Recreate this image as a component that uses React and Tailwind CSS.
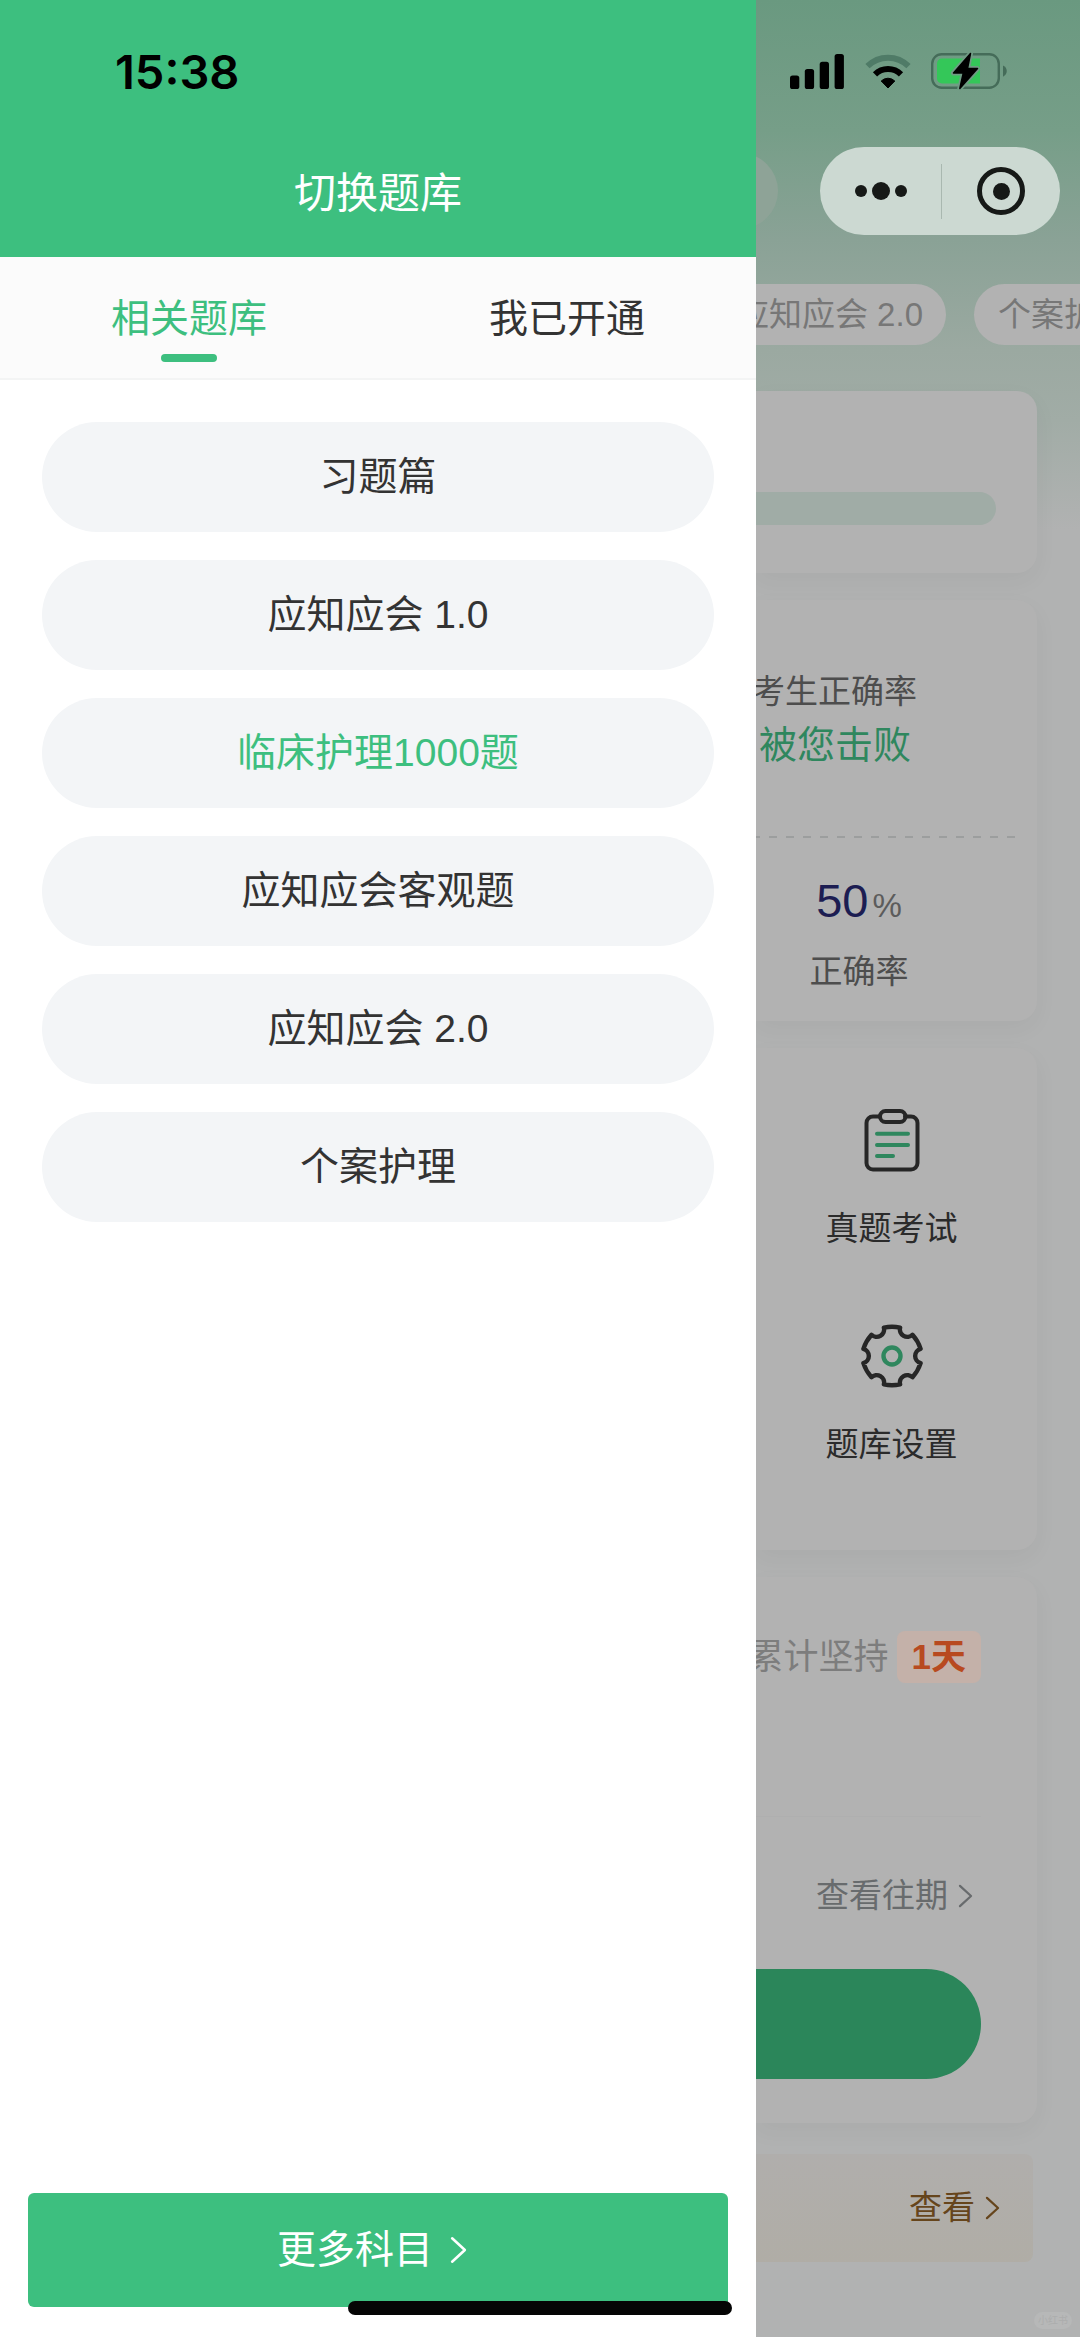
import React from "react";

const FONT = "font-['Liberation_Sans','Noto_Sans_CJK_SC',sans-serif]";

const BANKS = [
  { name: "习题篇" },
  { name: "应知应会 1.0" },
  { name: "临床护理1000题", active: true },
  { name: "应知应会客观题" },
  { name: "应知应会 2.0" },
  { name: "个案护理" },
];

function polar(r, deg) {
  const a = (deg * Math.PI) / 180;
  return `${(32 + r * Math.cos(a)).toFixed(2)} ${(32 + r * Math.sin(a)).toFixed(2)}`;
}

const GEAR = [0, 1, 2, 3, 4, 5]
  .map((k) => {
    const t = -90 + 60 * k;
    return `${k === 0 ? "M" : "L"}${polar(29.5, t - 16)}A40 40 0 0 1 ${polar(29.5, t + 16)}A7.4 7.4 0 0 0 ${polar(29.5, t + 44)}`;
  })
  .join("") + "Z";

function Chevron({ className }) {
  return (
    <svg viewBox="0 0 16 26" className={className} fill="none" stroke="currentColor" strokeWidth="2.4" strokeLinecap="round" strokeLinejoin="round" aria-hidden="true">
      <path d="M2 2l12 11L2 24" />
    </svg>
  );
}

function SignalIcon() {
  return (
    <svg viewBox="0 0 54 35" className="h-[35px] w-[54px]" aria-hidden="true">
      <rect x="0" y="21.5" width="9.3" height="13.5" rx="2.6" />
      <rect x="14.8" y="15" width="9.3" height="20" rx="2.6" />
      <rect x="29.7" y="7.8" width="9.3" height="27.2" rx="2.6" />
      <rect x="44.6" y="0" width="9.3" height="35" rx="2.6" />
    </svg>
  );
}

function WifiIcon() {
  return (
    <svg viewBox="0 0 46 35" className="h-[35px] w-[46px]" aria-hidden="true">
      <path d="M2.5 12.2A29 29 0 0 1 43.5 12.2" fill="none" stroke="#4f7b67" strokeWidth="6" />
      <path d="M10 20.3A18.6 18.6 0 0 1 36 20.3" fill="none" stroke="#000" strokeWidth="6" />
      <path d="M16.2 27A9.7 9.7 0 0 1 29.8 27L23 34Z" stroke="#000" strokeWidth="1" strokeLinejoin="round" />
    </svg>
  );
}

function BatteryIcon() {
  return (
    <svg viewBox="0 0 76 38" className="h-[38px] w-[76px]" aria-hidden="true">
      <rect x="1.2" y="2.2" width="66.6" height="33.6" rx="9.5" fill="none" stroke="#456c59" strokeWidth="2.4" />
      <path d="M72 13.5c5 2.2 5 9 0 11.2z" fill="#456c59" />
      <path d="M11 6.5H49V31.5H11a5 5 0 0 1-5-5V11.5a5 5 0 0 1 5-5z" fill="#34c759" />
      <path d="M39.5 1.5L22.5 21h9.8L28.8 36.5 46.5 16.5H36.5z" fill="#000" stroke="#6f9b84" strokeWidth="5" strokeLinejoin="round" />
      <path d="M39.5 1.5L22.5 21h9.8L28.8 36.5 46.5 16.5H36.5z" fill="#000" stroke="#000" strokeWidth="1.5" strokeLinejoin="round" />
    </svg>
  );
}

function ClipboardIcon() {
  return (
    <svg viewBox="0 0 64 64" className="size-16" fill="none" strokeWidth="4" strokeLinecap="round" strokeLinejoin="round" aria-hidden="true">
      <g stroke="#262626">
        <path d="M20 8.5H13a6.500 6.500 0 0 0-6.500 6.500v40a6.500 6.500 0 0 0 6.500 6.500h38a6.500 6.500 0 0 0 6.500-6.500V15A6.500 6.500 0 0 0 51 8.500h-6" />
        <rect x="20" y="3" width="25.5" height="11" rx="5.5" />
      </g>
      <path d="M17 25.8h31M17 37h31M17 48h16" stroke="#2f875e" />
    </svg>
  );
}

function GearIcon() {
  return (
    <svg viewBox="0 0 64 64" className="size-16" fill="none" strokeLinejoin="round" aria-hidden="true">
      <path d={GEAR} stroke="#262626" strokeWidth="4.4" />
      <circle cx="32" cy="32" r="8.5" stroke="#2f875e" strokeWidth="4.4" />
    </svg>
  );
}

function Drawer() {
  return (
    <aside className="flex w-[70%] shrink-0 flex-col bg-white text-[#333]">
      <header className="flex h-[257px] flex-col bg-[#3dbf7f]">
        <time className="pt-[44px] pl-[115px] font-['Inter',sans-serif] text-[47px] leading-[56px] font-semibold text-black">15:38</time>
        <h1 className="pt-16 text-center text-[42px] leading-[60px] text-white">切换题库</h1>
      </header>
      <div role="tablist" className="grid h-[123px] grid-cols-2 border-b-2 border-[#f3f4f4] bg-[#fbfbfb] text-[39px] leading-[56px]">
        <button role="tab" aria-selected="true" className="flex flex-col items-center pt-[34px] text-[#3dbf7f]">
          相关题库
          <span className="mt-[7px] h-2 w-14 rounded-full bg-[#3dbf7f]" />
        </button>
        <button role="tab" aria-selected="false" className="flex flex-col items-center pt-[34px]">我已开通</button>
      </div>
      <ul className="flex flex-col gap-7 px-[42px] pt-[42px]">
        {BANKS.map((b) => (
          <li key={b.name}>
            <button className={`h-[110px] w-full rounded-full bg-[#f3f5f7] text-[39px] leading-[56px] ${b.active ? "text-[#3dbf7f]" : "text-[#333]"}`}>
              {b.name}
            </button>
          </li>
        ))}
      </ul>
      <div className="mt-auto px-7 pb-[30px]">
        <button className="flex h-[114px] w-full items-center justify-center gap-[17px] rounded-md bg-[#3dbf7f] pr-3 text-[39px] leading-[56px] text-white">
          更多科目
          <Chevron className="h-[28px] w-[17px]" />
        </button>
      </div>
    </aside>
  );
}

const CARD = "bg-[#b2b2b2] shadow-[0_8px_24px_rgba(0,0,0,0.04)]";

function Page() {
  return (
    <main className="flex min-w-0 flex-1 flex-col overflow-hidden bg-[#b1b2b2] bg-[linear-gradient(180deg,#6a9980_0px,#769e88_130px,#8aa296_240px,#9ba9a1_350px,#a1aca6_420px,#b1b2b2_530px)] text-[33px] leading-[48px] text-[#4d4d4d]">
      <div className="flex items-center pt-[52px] pl-[34px]">
        <SignalIcon />
        <div className="pl-[21px]"><WifiIcon /></div>
        <div className="pl-5"><BatteryIcon /></div>
      </div>

      <div className="flex items-center justify-between pt-[57px] pr-5">
        <div className="-ml-[54px] size-[76px] rounded-full bg-[#8ea397]" />
        <div className="flex h-[88px] w-[240px] items-center rounded-full bg-[#ccd9d2] text-[#161917]">
          <button aria-label="更多" className="flex h-full w-[121px] items-center justify-center gap-[5px]">
            <span className="size-3 rounded-full bg-current" />
            <span className="size-[18px] rounded-full bg-current" />
            <span className="size-3 rounded-full bg-current" />
          </button>
          <span className="h-[55px] w-px bg-[#a9b8b0]" />
          <button aria-label="关闭" className="flex h-full flex-1 items-center justify-center">
            <span className="flex size-12 items-center justify-center rounded-full border-[5px] border-current">
              <span className="size-[17px] rounded-full bg-current" />
            </span>
          </button>
        </div>
      </div>

      <div className="grid grid-cols-[190px_1fr] gap-7 pt-[49px] text-[#777]">
        <button className="flex h-[61px] items-center justify-end rounded-r-full bg-[#b2b2b2] pr-[23px] whitespace-nowrap">应知应会 2.0</button>
        <button className="flex h-[61px] items-center overflow-hidden rounded-l-full bg-[#b2b2b2] pl-6 whitespace-nowrap">个案护理</button>
      </div>

      <div className="flex flex-col gap-[27px] pt-[46px] pr-[43px]">
        <section className={`rounded-r-[20px] pt-[101px] pr-[41px] pb-12 ${CARD}`}>
          <div className="h-[33px] rounded-r-full bg-[#a0aca6]" />
        </section>

        <section className={`h-[421px] rounded-r-[20px] pt-[68px] ${CARD}`}>
          <p className="flex justify-end pr-[120px] whitespace-nowrap">考生正确率</p>
          <p className="flex justify-end pr-[126px] text-[38px] leading-[58px] whitespace-nowrap text-[#2f875e]">被您击败</p>
          <svg className="mt-[62px] block h-[3px] w-full pr-[18px]" aria-hidden="true">
            <line x1="-4" y1="1" x2="100%" y2="1" stroke="#9c9e9e" strokeWidth="2" strokeDasharray="8 9" />
          </svg>
          <div className="pt-[30px] pr-[75px] text-center">
            <p className="flex items-baseline justify-center gap-1 text-[47px] leading-[64px] text-[#1c1d52]">
              50<span className="text-[33px] text-[#5c5c5c]">%</span>
            </p>
            <p className="pt-2.5">正确率</p>
          </div>
        </section>

        <section className={`flex h-[502px] flex-col items-center rounded-r-[20px] pt-[60px] pr-[10px] text-[#2b2b2b] ${CARD}`}>
          <button className="flex flex-col items-center gap-[33px]">
            <ClipboardIcon />
            真题考试
          </button>
          <button className="mt-[71px] flex flex-col items-center gap-[33px]">
            <GearIcon />
            题库设置
          </button>
        </section>

        <section className={`h-[546px] rounded-r-[20px] pt-[54px] pr-[56px] ${CARD}`}>
          <div className="flex items-center justify-end gap-2 text-[35px] leading-[52px] whitespace-nowrap text-[#7d7d7d]">
            累计坚持
            <span className="rounded-lg bg-[#c4b1a9] px-[15px] font-bold text-[#b84a20]">1天</span>
          </div>
          <div className="mt-[133px] h-px bg-[#afafaf]" />
          <button className="mt-[55px] ml-auto flex items-center gap-2.5 pr-2 text-[#686b6d]">
            查看往期
            <Chevron className="h-[24px] w-[15px]" />
          </button>
          <button aria-label="开始" className="mt-[49px] block h-[110px] w-full rounded-r-full bg-[#2b865a]" />
        </section>

        <section className="mt-1 mr-1 flex h-[108px] items-center justify-end rounded-r-lg bg-linear-to-b from-[#b0aeac] to-[#b0ada6] pr-[33px] text-[#66451c]">
          <button className="flex items-center gap-2.5">
            查看
            <Chevron className="h-[24px] w-[15px]" />
          </button>
        </section>
      </div>

      <div className="mt-auto flex justify-end pr-2 pb-2">
        <span className="rounded-full bg-[#b7b8b8] px-1 text-[10px] leading-[17px] text-[#acadad]">小红书</span>
      </div>
    </main>
  );
}

export default function App() {
  return (
    <div className={`relative flex min-h-screen overflow-hidden ${FONT}`}>
      <Drawer />
      <Page />
      <div className="absolute bottom-[22px] left-1/2 h-[14px] w-[384px] -translate-x-1/2 rounded-full bg-[#050505]" />
    </div>
  );
}
